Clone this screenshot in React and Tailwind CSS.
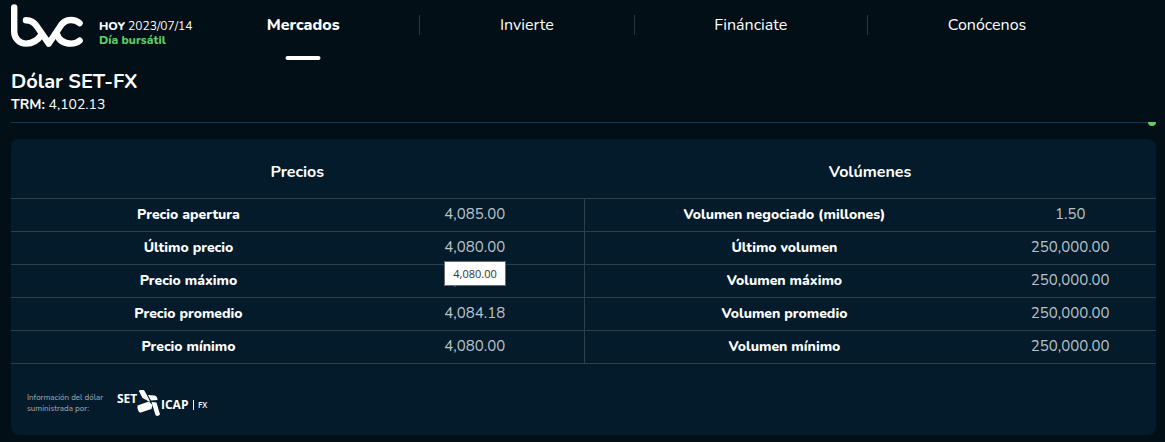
import React from "react";

const menu = ["Mercados", "Invierte", "Finánciate", "Conócenos"];

const precios = [
  ["Precio apertura", "4,085.00"],
  ["Último precio", "4,080.00"],
  ["Precio máximo", "4,096.00"],
  ["Precio promedio", "4,084.18"],
  ["Precio mínimo", "4,080.00"],
];

const volumenes = [
  ["Volumen negociado (millones)", "1.50"],
  ["Último volumen", "250,000.00"],
  ["Volumen máximo", "250,000.00"],
  ["Volumen promedio", "250,000.00"],
  ["Volumen mínimo", "250,000.00"],
];

const Logo = () => (
  <svg width="72" height="44" viewBox="0 0 72 44" fill="none" stroke="#fff" strokeWidth="6.4" strokeLinecap="round" strokeLinejoin="round" aria-label="bvc">
    <path d="M3.2 3.4V28A11.8 11.8 0 0 0 15 39.6C22 39.6 26.5 37 30.5 30.5" />
    <path d="M15 16.2C20 16.2 23.5 18.5 26 22.5L37.8 39.6L48.5 23.5C51 18.8 55 16 60 16C63.5 16 66.3 17.2 68.6 19.2" />
    <path d="M45.5 29C47.5 36 53 39.6 60 39.6C63.5 39.6 66.3 38.6 68.6 36.6" />
  </svg>
);

const SetIcapLogo = () => (
  <svg width="92" height="28" viewBox="0 0 92 28" fill="#fff" fontFamily="Open Sans, sans-serif" fontWeight="700" aria-label="SET ICAP FX">
    <text x="0" y="14" fontSize="12">SET</text>
    <path d="M22 2.2Q22 1 23.5 1L26 1Q27 1 27.6 2L32 10L33 13L25.5 9Z" />
    <path d="M31 6L37.5 6.5Q40.5 7 40.5 11L34 11.6Z" />
    <path d="M20.5 16.5L31.8 12.5L35.6 16L34.5 20L23 23.8Q20 21.5 20.5 16.5Z" />
    <path d="M34.5 13L39.5 13.5L43 25.5Q40.5 28 38.5 26Z" />
    <text x="44" y="20" fontSize="12">ICAP</text>
    <path d="M76 11h1v10h-1z" />
    <text x="81" y="19" fontSize="8" fontWeight="600">FX</text>
  </svg>
);

const Tabla = ({ title, rows, labelCol, cellBorder, tooltipRow }) => (
  <table className="w-full table-fixed border-collapse text-center">
    <colgroup>
      <col className={labelCol} />
      <col />
    </colgroup>
    <thead>
      <tr className="h-[59px] border-b border-[#2b404d]">
        <th colSpan={2} className="pt-2 text-base font-bold">{title}</th>
      </tr>
    </thead>
    <tbody>
      {rows.map(([label, value], i) => (
        <tr key={label} className="h-[33px] border-b border-[#2b404d] text-sm">
          <th scope="row" className={`font-extrabold ${cellBorder}`}>{label}</th>
          <td className="text-[15px] text-[#b9c2c9]">
            <span className="relative">
              {value}
              {i === tooltipRow && (
                <span role="tooltip" className="absolute top-full left-0 z-10 mt-1 border border-[#6b6b6b] bg-white px-2 font-['Open_Sans',sans-serif] text-[11px] leading-[23px] text-[#333]">
                  {value}
                </span>
              )}
            </span>
          </td>
        </tr>
      ))}
    </tbody>
  </table>
);

const App = () => {
  return (
    <div className="min-h-screen bg-[#020f17] pr-[9px] pb-2 pl-[11px] font-['Nunito','Open_Sans',sans-serif] text-white">
      <header className="flex items-start">
        <div className="flex w-44 shrink-0 gap-4 pt-1">
          <a href="#" className="shrink-0"><Logo /></a>
          <div className="pt-[15px] text-xs leading-[14px] whitespace-nowrap">
            <p><strong className="font-extrabold">HOY</strong> 2023/07/14</p>
            <p className="font-extrabold text-[#5fcf65]">Día bursátil</p>
          </div>
        </div>
        <nav className="mr-[50px] flex flex-1 pt-[15px]">
          {menu.map((item, i) => (
            <a
              key={item}
              href="#"
              className={`relative flex-auto text-center text-base leading-5 ${i === 0 ? "font-extrabold" : "border-l border-[#26363f]"}`}
            >
              {item}
              {i === 0 && <span className="absolute top-[41px] left-1/2 h-1 w-[35px] -translate-x-1/2 rounded-full bg-white" />}
            </a>
          ))}
        </nav>
      </header>

      <section className="mt-5 border-b border-[#14364f] pb-2">
        <h1 className="text-xl leading-7 font-bold">Dólar SET-FX</h1>
        <p className="text-sm leading-[18px]"><strong className="font-bold">TRM:</strong> 4,102.13</p>
      </section>
      <div className="-mt-px ml-auto h-1 w-2 rounded-b bg-[#5fcf65]" />

      <main className="mt-[13px] rounded-lg bg-[#031b2a]">
        <div className="grid grid-cols-2">
          <Tabla title="Precios" rows={precios} labelCol="w-[62%]" cellBorder="" tooltipRow={1} />
          <Tabla title="Volúmenes" rows={volumenes} labelCol="w-[70%]" cellBorder="border-l border-[#2b404d]" />
        </div>
        <footer className="flex items-center gap-[14px] px-4 pt-[25px] pb-[18px]">
          <p className="text-[8px] leading-[11px] text-[#a5afb6]">
            Información del dólar<br />suministrada por:
          </p>
          <SetIcapLogo />
        </footer>
      </main>
    </div>
  );
};

export default App;
